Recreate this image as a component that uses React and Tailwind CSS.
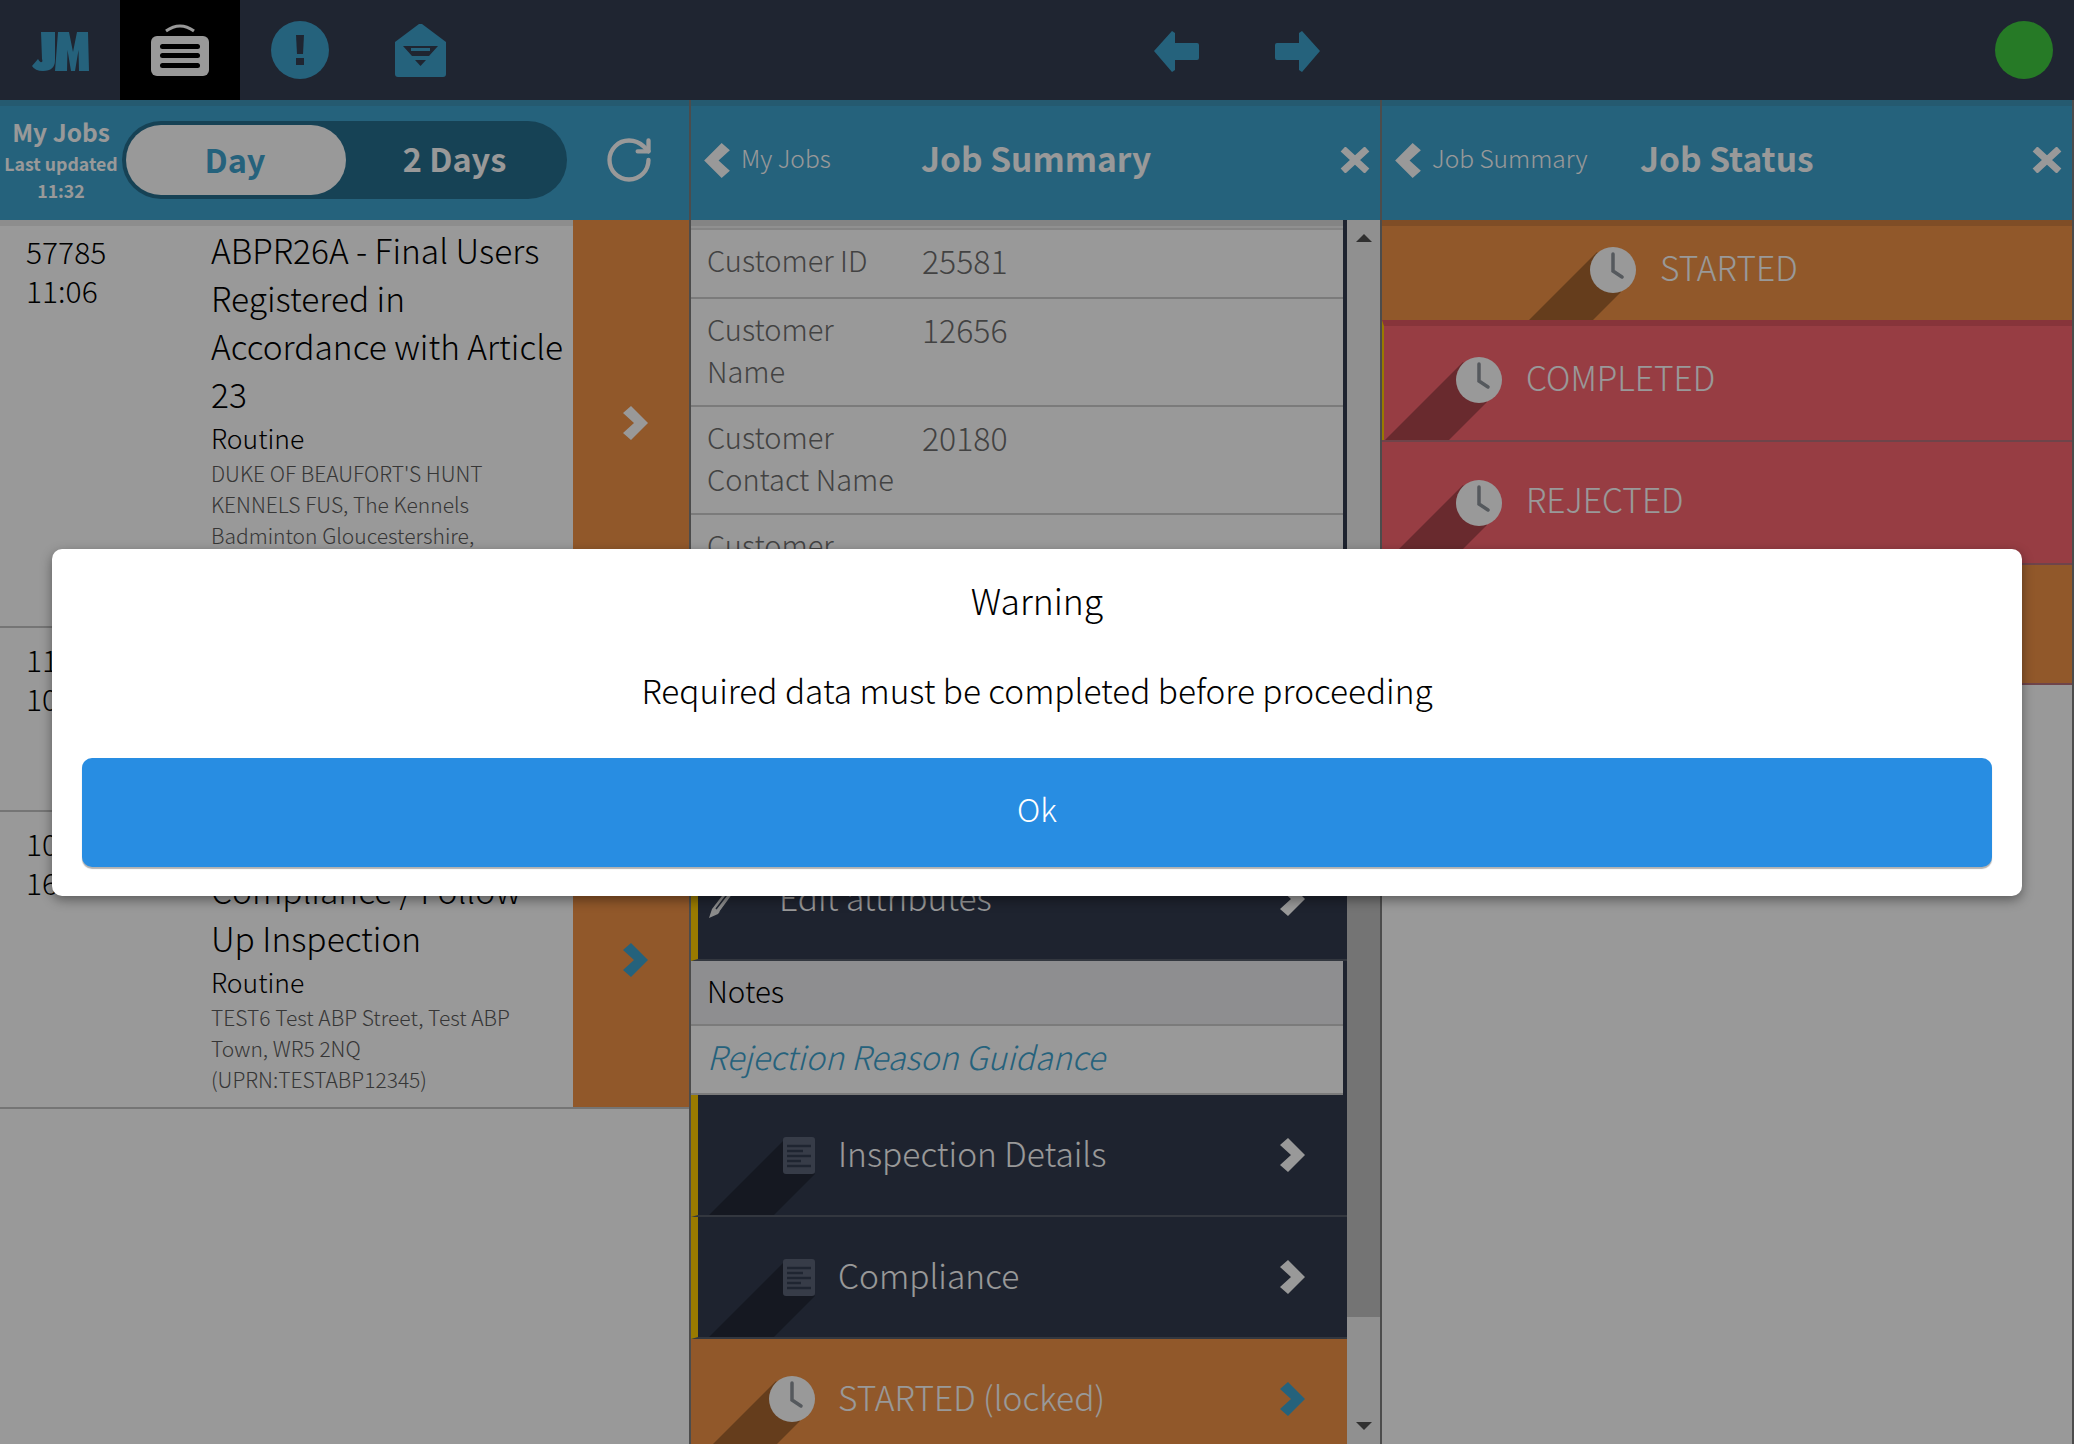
import { RotateCw } from "lucide-react";

const font = { fontFamily: '"Noto Sans CJK SC", "Noto Sans", sans-serif' };

const ChevronRight = ({ className }) => (
  <svg viewBox="0 0 25 34" className={`w-[25px] h-[34px] ${className}`}>
    <polygon points="8,0 25,17 8,34 0,27 11,17 0,7" fill="currentColor" />
  </svg>
);

const ChevronLeft = () => (
  <svg viewBox="0 0 25 34" className="w-[26px] h-[35px] text-white">
    <polygon points="17,0 0,17 17,34 25,27 14,17 25,7" fill="currentColor" />
  </svg>
);

const CloseIcon = () => (
  <svg viewBox="0 0 30 26" className="w-[30px] h-[26px] text-white">
    <path d="M3 2 L27 24 M27 2 L3 24" stroke="currentColor" strokeWidth="7" />
  </svg>
);

const Clock = () => (
  <div className="relative w-[46px] h-[46px] shrink-0">
    <svg className="absolute left-0 top-0 overflow-visible" width="46" height="46">
      <polygon points="7,5 -193,205 -169,245 31,45" fill="rgba(0,0,0,0.3)" />
    </svg>
    <svg className="absolute left-0 top-0" viewBox="0 0 46 46" width="46" height="46">
      <circle cx="23" cy="23" r="23" fill="#ffffff" />
      <path d="M23 7 V24 L32 30" stroke="#8e949c" strokeWidth="3.5" fill="none" strokeLinecap="round" />
    </svg>
  </div>
);

const DocIcon = () => (
  <div className="relative w-[32px] h-[37px] shrink-0">
    <svg className="absolute left-0 top-0 overflow-visible" width="32" height="37">
      <polygon points="0,4 -200,204 -168,237 32,37" fill="rgba(0,0,0,0.3)" />
    </svg>
    <svg className="absolute left-0 top-0" viewBox="0 0 32 37" width="32" height="37">
      <rect width="32" height="37" rx="3" fill="#5c6478" />
      <path d="M4 9 H28 M4 14 H20 M4 19 H28 M4 24 H18 M4 29 H28" stroke="#343e52" strokeWidth="2.5" />
    </svg>
  </div>
);

const PencilIcon = () => (
  <svg viewBox="0 0 34 40" className="w-[34px] h-[40px] shrink-0 mr-[73px]">
    <path d="M1 39 L4 30 L27 0 L33 5 L10 35 Z" fill="#e8e8e8" />
    <path d="M8 30 L28 4 M12 33 L31 7" stroke="#343e52" strokeWidth="1.5" />
  </svg>
);

const PanelHeader = ({ back, title, backWidth }) => (
  <div className="h-[120px] shrink-0 bg-[#3ea3cf] border-t-[6px] border-[#3f96bb] flex items-center pl-[13px] pb-[6px]">
    <ChevronLeft />
    <span className={`ml-[11px] pb-[4px] text-[24.5px] font-light text-white ${backWidth}`}>{back}</span>
    <span className="pb-[4px] text-[33.5px] font-bold text-white flex-1">{title}</span>
    <span className="mr-[10px]">
      <CloseIcon />
    </span>
  </div>
);

const JobRow = ({ num, time, title, address, arrow, bottom = "pb-[13px]" }) => (
  <div className="flex border-b-2 border-[#c4c4c4]">
    <div className="w-[211px] shrink-0 pl-[26px] pt-[12px] text-[30px] leading-[39px] text-black font-light">
      <div>{num}</div>
      <div>{time}</div>
    </div>
    <div className={`flex-1 pt-[6px] pr-[4px] ${bottom}`}>
      <div className="text-[33.5px] leading-[48px] text-black font-light">{title}</div>
      <div className="text-[26.5px] leading-[40px] text-black font-light">Routine</div>
      <div className="text-[21px] leading-[31px] text-[#5a5a5a] font-light">
        {address.map((line) => (
          <div key={line}>{line}</div>
        ))}
      </div>
    </div>
    <div className="w-[116px] shrink-0 bg-[#f29346] flex items-center justify-center pl-[8px]">
      <ChevronRight className={arrow} />
    </div>
  </div>
);

const InfoRow = ({ label, value, className }) => (
  <div className={`flex pl-[16px] pt-[8px] pb-[14px] bg-white border-b-2 border-[#cdcdcd] text-[29px] leading-[42px] font-light text-[#6e6e6e] ${className}`}>
    <div className="w-[195px] mr-[20px] shrink-0">{label}</div>
    <div className="text-[32px] mt-[1px]">{value}</div>
  </div>
);

const MenuRow = ({ icon, label, chevron = "text-white", bg = "bg-[#333b4f] border-l-[#ffcc00]", textClass = "" }) => (
  <div className={`relative overflow-hidden h-[122px] shrink-0 flex items-center border-l-[7px] border-b-2 border-b-[#555c69] ${bg}`}>
    <div className="w-[140px] shrink-0 flex justify-end pr-[23px]">{icon}</div>
    <span className={`text-[33.5px] pb-[4px] font-light text-white ${textClass}`}>{label}</span>
    <span className="ml-auto mr-[42px]">
      <ChevronRight className={chevron} />
    </span>
  </div>
);

const StatusRow = ({ label, pad, className }) => (
  <div className={`relative overflow-hidden flex items-center ${className}`}>
    <div className={`${pad} flex items-center gap-[24px]`}>
      <Clock />
      <span className="text-[33.5px] pb-[6px] font-light text-white">{label}</span>
    </div>
  </div>
);

const App = () => {
  return (
    <div style={font} className="relative w-[2074px] h-[1444px] overflow-hidden bg-white flex flex-col">
      {/* top bar */}
      <div className="h-[100px] shrink-0 bg-[#343e52] flex">
        <div className="w-[120px] flex items-center justify-center pt-[4px]">
          <svg viewBox="0 0 57 40" className="w-[57px] h-[40px]">
            <path d="M9 0 H23 V28 Q23 39 11 39 Q3 39 0 34 L6 27 Q8 31 9.5 30 Q11 30 10 27 Z" fill="#3ea3cf" />
            <path d="M23 39 L26 0 H37 L41 20 L45 0 H56 L57 39 H47 L46.5 18 L43 39 H39 L35.5 18 L35 39 Z" fill="#3ea3cf" />
          </svg>
        </div>
        <div className="w-[120px] bg-black flex items-center justify-center">
          <svg viewBox="0 0 58 52" className="w-[58px] h-[52px]">
            <path d="M15 7 Q29 -3 43 7" stroke="#fff" strokeWidth="3" fill="none" />
            <rect y="12" width="58" height="40" rx="6" fill="#fff" />
            <rect x="9" y="20" width="40" height="5" rx="2.5" fill="#000" />
            <rect x="9" y="29" width="40" height="5" rx="2.5" fill="#000" />
            <rect x="9" y="39" width="40" height="5" rx="2.5" fill="#000" />
          </svg>
        </div>
        <div className="w-[120px] flex items-center justify-center">
          <svg viewBox="0 0 58 58" className="w-[58px] h-[58px]">
            <circle cx="29" cy="29" r="29" fill="#3ea3cf" />
            <path d="M25 14 H33 L32 33 H26 Z" fill="#343e52" />
            <rect x="25" y="37" width="8" height="7" fill="#343e52" />
          </svg>
        </div>
        <div className="w-[120px] flex items-center justify-center">
          <svg viewBox="0 0 51 53" className="w-[51px] h-[53px]">
            <path d="M0 18 L24 0 H27 L51 18 V50 Q51 53 48 53 H3 Q0 53 0 50 Z" fill="#3ea3cf" />
            <path d="M8 22 H43 L34 32 H17 Z M16 24 H35 V27 H16 Z" fill="#343e52" fillRule="evenodd" />
            <path d="M20 36 H31 L25.5 42 Z" fill="#343e52" />
          </svg>
        </div>
        <div className="ml-[636px] w-[120px] flex items-center justify-center pt-[3px]">
          <svg viewBox="0 0 45 41" className="w-[45px] h-[41px]">
            <path d="M0 20 L18 0 L21 2 V12 H43 Q45 12 45 14 V27 Q45 29 43 29 H21 V39 L18 41 Z" fill="#3ea3cf" />
          </svg>
        </div>
        <div className="w-[120px] flex items-center justify-center pt-[2px] pl-[2px]">
          <svg viewBox="0 0 45 41" className="w-[45px] h-[41px]">
            <path d="M45 20 L27 0 L24 2 V12 H2 Q0 12 0 14 V27 Q0 29 2 29 H24 V39 L27 41 Z" fill="#3ea3cf" />
          </svg>
        </div>
        <div className="ml-auto w-[79px] flex items-center">
          <div className="w-[58px] h-[58px] rounded-full bg-[#40cc40]" />
        </div>
      </div>

      <div className="flex-1 flex min-h-0 bg-white">
        {/* my jobs */}
        <div className="w-[691px] shrink-0 border-r-2 border-[#7f7f7f] flex flex-col overflow-hidden">
          <div className="h-[120px] shrink-0 bg-[#3ea3cf] border-t-[6px] border-[#3f96bb] flex items-center pb-[6px]">
            <div className="w-[122px] shrink-0 text-center text-white font-bold pb-[3px]">
              <div className="text-[24.5px] leading-[36px]">My Jobs</div>
              <div className="text-[17.7px] leading-[27px]">Last updated</div>
              <div className="text-[17.7px] leading-[26px]">11:32</div>
            </div>
            <div className="w-[445px] h-[78px] rounded-full bg-[#266e8e] flex items-center p-[4px]">
              <div className="w-[220px] h-[70px] pb-[2px] pr-[2px] rounded-full bg-white flex items-center justify-center text-[32.5px] font-bold text-[#3ea3cf]">
                Day
              </div>
              <div className="flex-1 pb-[3px] text-center text-[32.5px] font-bold text-white">2 Days</div>
            </div>
            <RotateCw size={52} strokeWidth={2} className="ml-[36px] text-white" />
          </div>
          <div className="flex-1 shadow-[inset_0_6px_0_rgba(0,0,0,0.08)]">
            <JobRow
              num="57785"
              time="11:06"
              title="ABPR26A - Final Users Registered in Accordance with Article 23"
              address={[
                "DUKE OF BEAUFORT'S HUNT",
                "KENNELS FUS, The Kennels",
                "Badminton Gloucestershire,",
                "South Gloucestershire, GL9 1DB",
                "(UPRN:100121345678)",
              ]}
              arrow="text-white"
            />
            <JobRow
              num="11482"
              time="10:30"
              title="ABPR12 - Annual Licence Inspection"
              address={["TEST5 Test ABP Street, WR5 2NQ"]}
              arrow="text-white"
              bottom="pb-[9px]"
            />
            <JobRow
              num="10327"
              time="16:15"
              title="ABPR30 - Non Compliance / Follow Up Inspection"
              address={["TEST6 Test ABP Street, Test ABP", "Town, WR5 2NQ", "(UPRN:TESTABP12345)"]}
              arrow="text-[#3ea3cf]"
              bottom="pb-[12px]"
            />
          </div>
        </div>

        {/* job summary */}
        <div className="w-[691px] shrink-0 border-r-2 border-[#7f7f7f] flex flex-col overflow-hidden">
          <PanelHeader back="My Jobs" title="Job Summary" backWidth="w-[180px]" />
          <div className="flex-1 flex min-h-0">
            <div className="flex-1 min-w-0 overflow-hidden flex flex-col bg-[#333b4f]">
              <div className="w-[652px] h-[10px] shrink-0 bg-[#f0f0f0] border-t-[6px] border-b-2 border-[#dcdcdc]" />
              <div className="w-[652px] shrink-0">
                <InfoRow label="Customer ID" value="25581" className="h-[69px]" />
                <InfoRow label="Customer Name" value="12656" />
                <InfoRow label="Customer Contact Name" value="20180" />
                <InfoRow label="Customer Address" value="" className="h-[324px] pt-[6px] border-b-0" />
              </div>
              <MenuRow icon={<PencilIcon />} label="Edit attributes" textClass="-ml-[59px]" />
              <div className="w-[652px] shrink-0 h-[65px] bg-[#ededf0] border-b-2 border-[#cdcdcd] flex items-center pl-[16px] pb-[5px] text-[29.5px] text-black font-light">
                Notes
              </div>
              <div className="w-[652px] shrink-0 h-[69px] bg-white border-b-2 border-[#cdcdcd] flex items-center pl-[16px] pb-[6px] text-[32.5px] italic font-light text-[#3ea3cf]">
                Rejection Reason Guidance
              </div>
              <MenuRow icon={<DocIcon />} label="Inspection Details" />
              <MenuRow icon={<DocIcon />} label="Compliance" />
              <MenuRow
                icon={<Clock />}
                label="STARTED (locked)"
                chevron="text-[#3ea3cf]"
                bg="bg-[#f29346] border-l-transparent"
              />
            </div>
            {/* scrollbar */}
            <div className="w-[33px] shrink-0 bg-[#f1f1f1] flex flex-col items-center">
              <div className="mt-[14px] w-0 h-0 border-x-[8px] border-x-transparent border-b-[8px] border-b-[#505050]" />
              <div className="mt-[340px] h-[735px] w-full bg-[#c1c1c1]" />
              <div className="mt-[105px] w-0 h-0 border-x-[8px] border-x-transparent border-t-[8px] border-t-[#505050]" />
            </div>
          </div>
        </div>

        {/* job status */}
        <div className="flex-1 min-w-0 border-r-2 border-[#7f7f7f] flex flex-col overflow-hidden">
          <PanelHeader back="Job Summary" title="Job Status" backWidth="w-[208px]" />
          <StatusRow
            label="STARTED"
            pad="pl-[208px] pb-[6px]"
            className="h-[100px] bg-[#f29346] border-t-[6px] border-[#d48040]"
          />
          <StatusRow
            label="COMPLETED"
            pad="pl-[72px] pb-[6px]"
            className="h-[120px] bg-[#fc6670] border-t-[6px] border-[#e15861] border-l-2 border-l-[#ffcc00]"
          />
          <StatusRow
            label="REJECTED"
            pad="pl-[74px]"
            className="h-[123px] bg-[#fc6670] border-t-2 border-[#b9727c]"
          />
          <StatusRow
            label="LOCKED"
            pad="pl-[74px]"
            className="h-[122px] bg-[#f29346] border-y-2 border-[#b9727c]"
          />
        </div>
      </div>

      {/* dim layer */}
      <div className="absolute inset-0 bg-black/40" />

      {/* warning dialog */}
      <div className="absolute left-[52px] top-[549px] w-[1970px] h-[347px] bg-white rounded-[10px] shadow-[0_4px_12px_rgba(0,0,0,0.4)] flex flex-col items-center px-[30px]">
        <div className="mt-[28px] text-[35.5px] leading-[46px] font-light text-black">Warning</div>
        <div className="mt-[44px] text-[33.4px] leading-[46px] font-light text-black">
          Required data must be completed before proceeding
        </div>
        <div className="mt-[45px] w-full h-[109px] pb-[10px] bg-[#288de2] rounded-[10px] shadow-[0_2px_1px_rgba(0,0,0,0.3)] flex items-center justify-center text-[32px] text-white font-light">
          Ok
        </div>
      </div>
    </div>
  );
};

export default App;
